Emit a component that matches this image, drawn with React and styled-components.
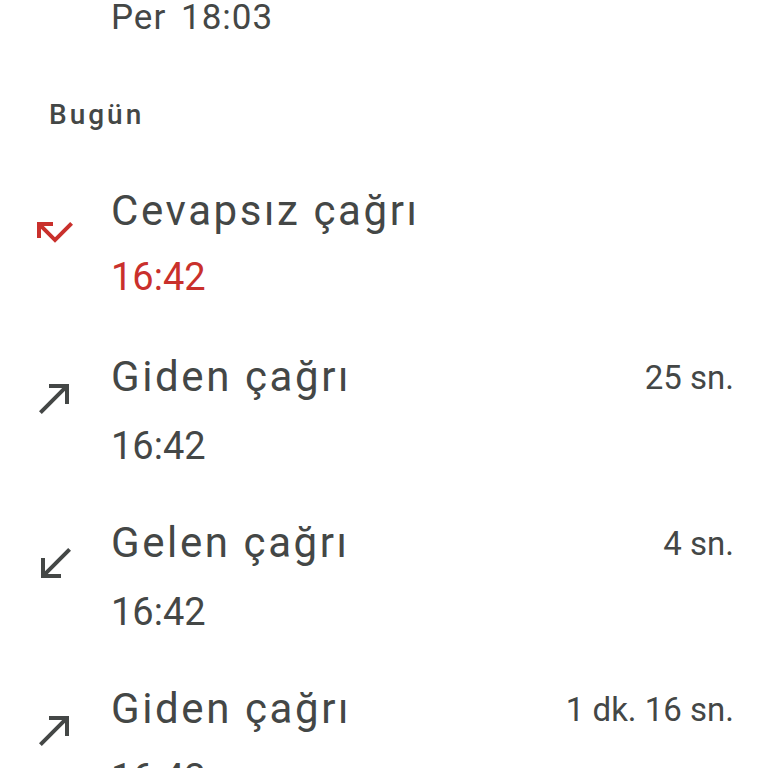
import React from "react";
import styled, { createGlobalStyle } from "styled-components";

const Global = createGlobalStyle`
  html, body { margin: 0; padding: 0; background: #ffffff; }
  body { font-family: Roboto, "Noto Sans", sans-serif; color: #444746; overflow: hidden; }
`;

const Page = styled.div`
  width: 768px;
  height: 768px;
  overflow: hidden;
  background: #ffffff;
  display: flex;
  flex-direction: column;
`;

const CutRow = styled.div`
  padding: 0 34px 26px 111px;
`;

const PrevSub = styled.div`
  font-size: 35px;
  line-height: 36px;
  letter-spacing: 1px;
  word-spacing: 5px;
  color: #444746;
`;

const SectionHeader = styled.div`
  padding: 35px 34px 26px 49px;
  font-size: 28px;
  line-height: 36px;
  font-weight: 500;
  letter-spacing: 3px;
  color: #444746;
`;

const Row = styled.div`
  display: flex;
  align-items: flex-start;
  gap: 32px;
  height: 166px;
  box-sizing: border-box;
  padding: 26px 34px 22px 31px;
  flex-shrink: 0;
`;

const IconBox = styled.div`
  width: 48px;
  height: 48px;
  margin-top: 23px;
  flex-shrink: 0;
  color: ${(p) => (p.$missed ? "#c9302c" : "#444746")};
  svg { display: block; width: 48px; height: 48px; }
`;

const Body = styled.div`
  flex: 1;
  display: flex;
  flex-direction: column;
  gap: 14px;
  min-width: 0;
`;

const TitleLine = styled.div`
  display: flex;
  align-items: baseline;
  justify-content: space-between;
`;

const Title = styled.div`
  font-size: 42px;
  line-height: 52px;
  letter-spacing: 2.6px;
  color: #444746;
  white-space: nowrap;
`;

const Duration = styled.div`
  font-size: 33px;
  line-height: 52px;
  color: #444746;
  white-space: nowrap;
  position: relative;
  top: -2px;
`;

const Time = styled.div`
  font-size: 38px;
  line-height: 52px;
  color: ${(p) => (p.$missed ? "#c9302c" : "#444746")};
`;

const icons = {
  missed: "M19.59 7L12 14.59 6.41 9H11V7H3v8h2v-4.59l7 7 9-9z",
  out: "M9 5v2h6.59L4 18.59 5.41 20 17 8.41V15h2V5z",
  in: "M20 5.41L18.59 4 7 15.59V9H5v10h10v-2H8.41z",
};

const CallIcon = ({ type }) => (
  <IconBox $missed={type === "missed"}>
    <svg viewBox="0 0 24 24" fill="currentColor">
      <path d={icons[type]} />
    </svg>
  </IconBox>
);

const calls = [
  { type: "missed", title: "Cevapsız çağrı", time: "16:42", dur: "" },
  { type: "out", title: "Giden çağrı", time: "16:42", dur: "25 sn." },
  { type: "in", title: "Gelen çağrı", time: "16:42", dur: "4 sn." },
  { type: "out", title: "Giden çağrı", time: "16:42", dur: "1 dk. 16 sn." },
];

export default function App() {
  return (
    <>
      <Global />
      <Page>
        <CutRow>
          <PrevSub>Per 18:03</PrevSub>
        </CutRow>
        <SectionHeader>Bugün</SectionHeader>
        {calls.map((c, i) => (
          <Row key={i}>
            <CallIcon type={c.type} />
            <Body>
              <TitleLine>
                <Title>{c.title}</Title>
                {c.dur && <Duration>{c.dur}</Duration>}
              </TitleLine>
              <Time $missed={c.type === "missed"}>{c.time}</Time>
            </Body>
          </Row>
        ))}
      </Page>
    </>
  );
}
